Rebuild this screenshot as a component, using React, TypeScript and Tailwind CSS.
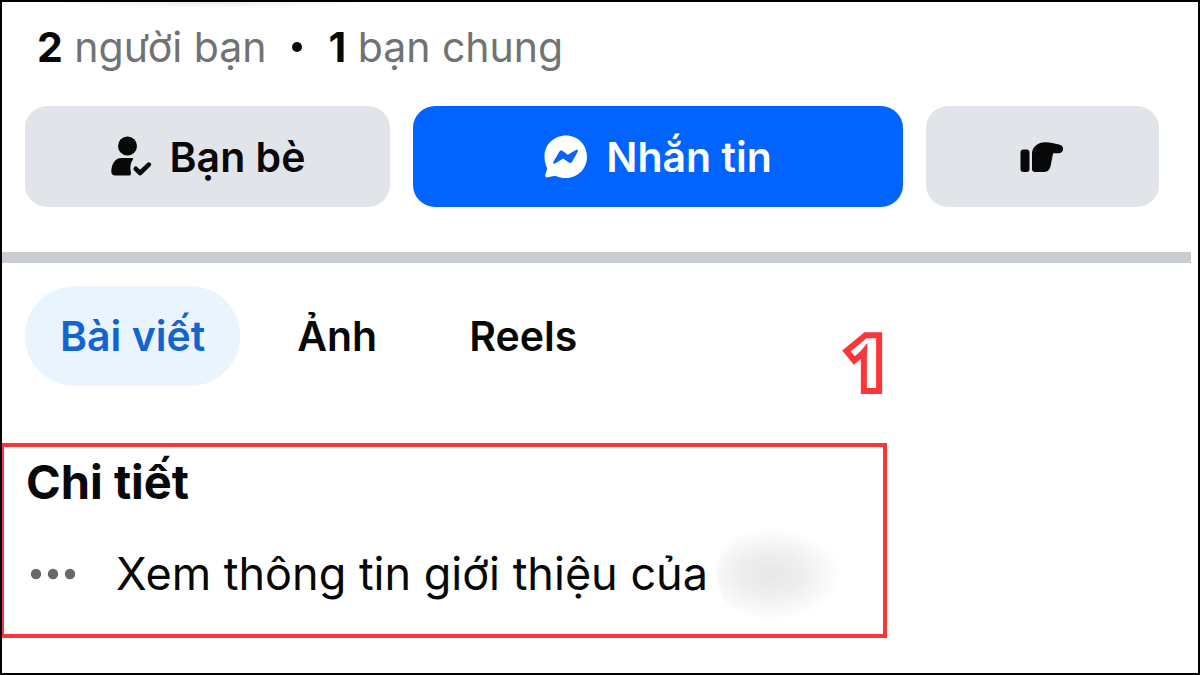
import type { ReactNode } from "react";

function FriendIcon() {
  return (
    <svg viewBox="0 0 42 42" className="h-[42px] w-[42px]" fill="currentColor" aria-hidden="true">
      <circle cx="17.500" cy="10" r="9.500" />
      <path d="M11.500 22H22.500C23.300 22 23.400 22.600 23 23.200C20.500 27 20 30.500 20.600 34.500C20.800 35.800 21 37 20.800 38C20.700 39.100 20.200 39.600 19 39.600H5.200C2.800 39.600 1.300 38 1.300 35.700C1.300 28 5.200 22 11.500 22Z" />
      <path d="M25.800 32.800L30.100 37L38.800 28.600" fill="none" stroke="currentColor" strokeWidth="4.600" strokeLinecap="round" strokeLinejoin="round" />
    </svg>
  );
}

function MessengerIcon() {
  return (
    <svg viewBox="0 0 44 44" className="h-[44px] w-[44px]" aria-hidden="true">
      <path d="M22 0.500C10 0.500 0.500 9.500 0.500 21.500C0.500 26 1.500 29.600 2.900 32.700C3.200 33.500 3.100 34.200 2.800 35L1.300 39.800C0.800 41.500 1.800 42.700 3.700 42.300L10 40.900C10.900 40.700 11.500 40.900 12.400 41.300C15.100 42.500 18.100 43.100 21.600 43.100C33.600 43.100 43 33.800 43 21.800S34 0.500 22 0.500Z" fill="#fff" />
      <path d="M9.300 27L15.300 16.800C16.200 15.300 17.800 15 19.100 16.200L23.800 19.700L31.900 14.900C33.300 14.200 34.400 15.400 33.700 16.700L28.300 26.500C27.300 28.200 25.700 28.400 24.400 27.200L19.200 23.400L11 28.500C9.700 29.300 8.600 28.200 9.300 27Z" fill="#0a63f5" />
    </svg>
  );
}

function PokeIcon() {
  return (
    <svg viewBox="0 0 46 32" className="h-[32px] w-[46px]" fill="currentColor" aria-hidden="true">
      <rect x="0.500" y="8.500" width="9" height="22.500" rx="3" />
      <path d="M12 12.500C12 6 18 1.200 25.500 1.200C30 1.200 34.500 2.600 39 3.600C41.700 4.200 43.100 5.800 43.100 8C43.100 10.500 41.300 12.200 38.500 12.200H34C33.300 12.200 33 12.500 32.900 13.200L30.700 24.500C29.800 29 27.500 31 23.500 31H15C13 31 12 30 12 28Z" />
    </svg>
  );
}

function ActionButton({ primary, label, children }: { primary?: boolean; label?: string; children: ReactNode }) {
  return (
    <button
      type="button"
      aria-label={label}
      className={
        primary
          ? "flex h-[101px] items-center justify-center gap-[18px] rounded-[22px] bg-[#0264ff] text-[41px] leading-[50px] font-semibold text-white"
          : "flex h-[101px] items-center justify-center gap-[18px] rounded-[22px] bg-[#e1e5ea] text-[41px] leading-[50px] font-semibold text-[#080809]"
      }
    >
      {children}
    </button>
  );
}

function Tab({ active, children }: { active?: boolean; children: ReactNode }) {
  return (
    <button
      type="button"
      aria-pressed={!!active}
      className={
        active
          ? "h-[100px] rounded-full bg-[#eaf4ff] px-[35px] text-[41px] leading-[50px] font-semibold text-[#1264d1]"
          : "h-[100px] rounded-full px-[35px] text-[41px] leading-[50px] font-semibold text-[#080809]"
      }
    >
      {children}
    </button>
  );
}

export default function App() {
  return (
    <main className="min-h-screen border-2 border-black bg-white font-['Inter','Liberation_Sans',sans-serif] text-[#080809]">
      <div className="ml-[58px] h-[6px] w-1/4 bg-[radial-gradient(ellipse_at_top,#ececec,#ffffff_75%)]" />
      <p className="flex items-center gap-[26px] pt-[14px] pl-[35px] text-[41px] leading-[50px] text-[#707274]">
        <span>
          <strong className="font-bold text-[#080809]">2</strong> người bạn
        </span>
        <span className="h-[10px] w-[10px] rounded-full bg-[#080809]" />
        <span>
          <strong className="font-bold text-[#080809]">1</strong> bạn chung
        </span>
      </p>

      <div className="mt-[34px] grid grid-cols-[365fr_490fr_233fr] gap-[23px] pr-[39px] pl-[23px]">
        <ActionButton>
          <FriendIcon />
          Bạn bè
        </ActionButton>
        <ActionButton primary>
          <MessengerIcon />
          Nhắn tin
        </ActionButton>
        <ActionButton label="Chọc">
          <PokeIcon />
        </ActionButton>
      </div>

      <hr className="mt-[45px] mr-[7px] h-[11px] border-0 bg-[#c9ccd0]" />

      <nav className="mt-[23px] flex gap-[22px] pl-[23px]">
        <Tab active>Bài viết</Tab>
        <Tab>Ảnh</Tab>
        <Tab>Reels</Tab>
      </nav>

      <section className="relative mt-[57px] w-[74%] border-4 border-l-2 border-[#ff3439] pt-[7px] pb-[12px] pl-[22px]">
        <span className="absolute -right-[6px] bottom-full mb-[41px] font-['Open_Sans','Noto_Sans',sans-serif] text-[78px] leading-[90px] font-extrabold text-white [-webkit-text-stroke:6px_#ff3439]">
          1
        </span>
        <h2 className="text-[47px] leading-[56px] font-bold">Chi tiết</h2>
        <a href="#gioi-thieu" className="mt-[16px] flex h-[96px] items-center text-[45px] leading-[56px]">
          <svg viewBox="0 0 46 12" className="mr-[40px] ml-[4px] h-[12px] w-[46px] shrink-0" fill="#65686c" aria-hidden="true">
            <circle cx="6" cy="6" r="5.200" />
            <circle cx="23" cy="6" r="5.200" />
            <circle cx="40" cy="6" r="5.200" />
          </svg>
          <span className="whitespace-nowrap">Xem thông tin giới thiệu của</span>
          <span className="ml-[9px] h-[96px] w-[128px] rounded-l-[48px] bg-[radial-gradient(ellipse_at_42%_50%,#e7e7e7_0%,#eeeeee_30%,#ffffff_68%)]" />
        </a>
      </section>
    </main>
  );
}
